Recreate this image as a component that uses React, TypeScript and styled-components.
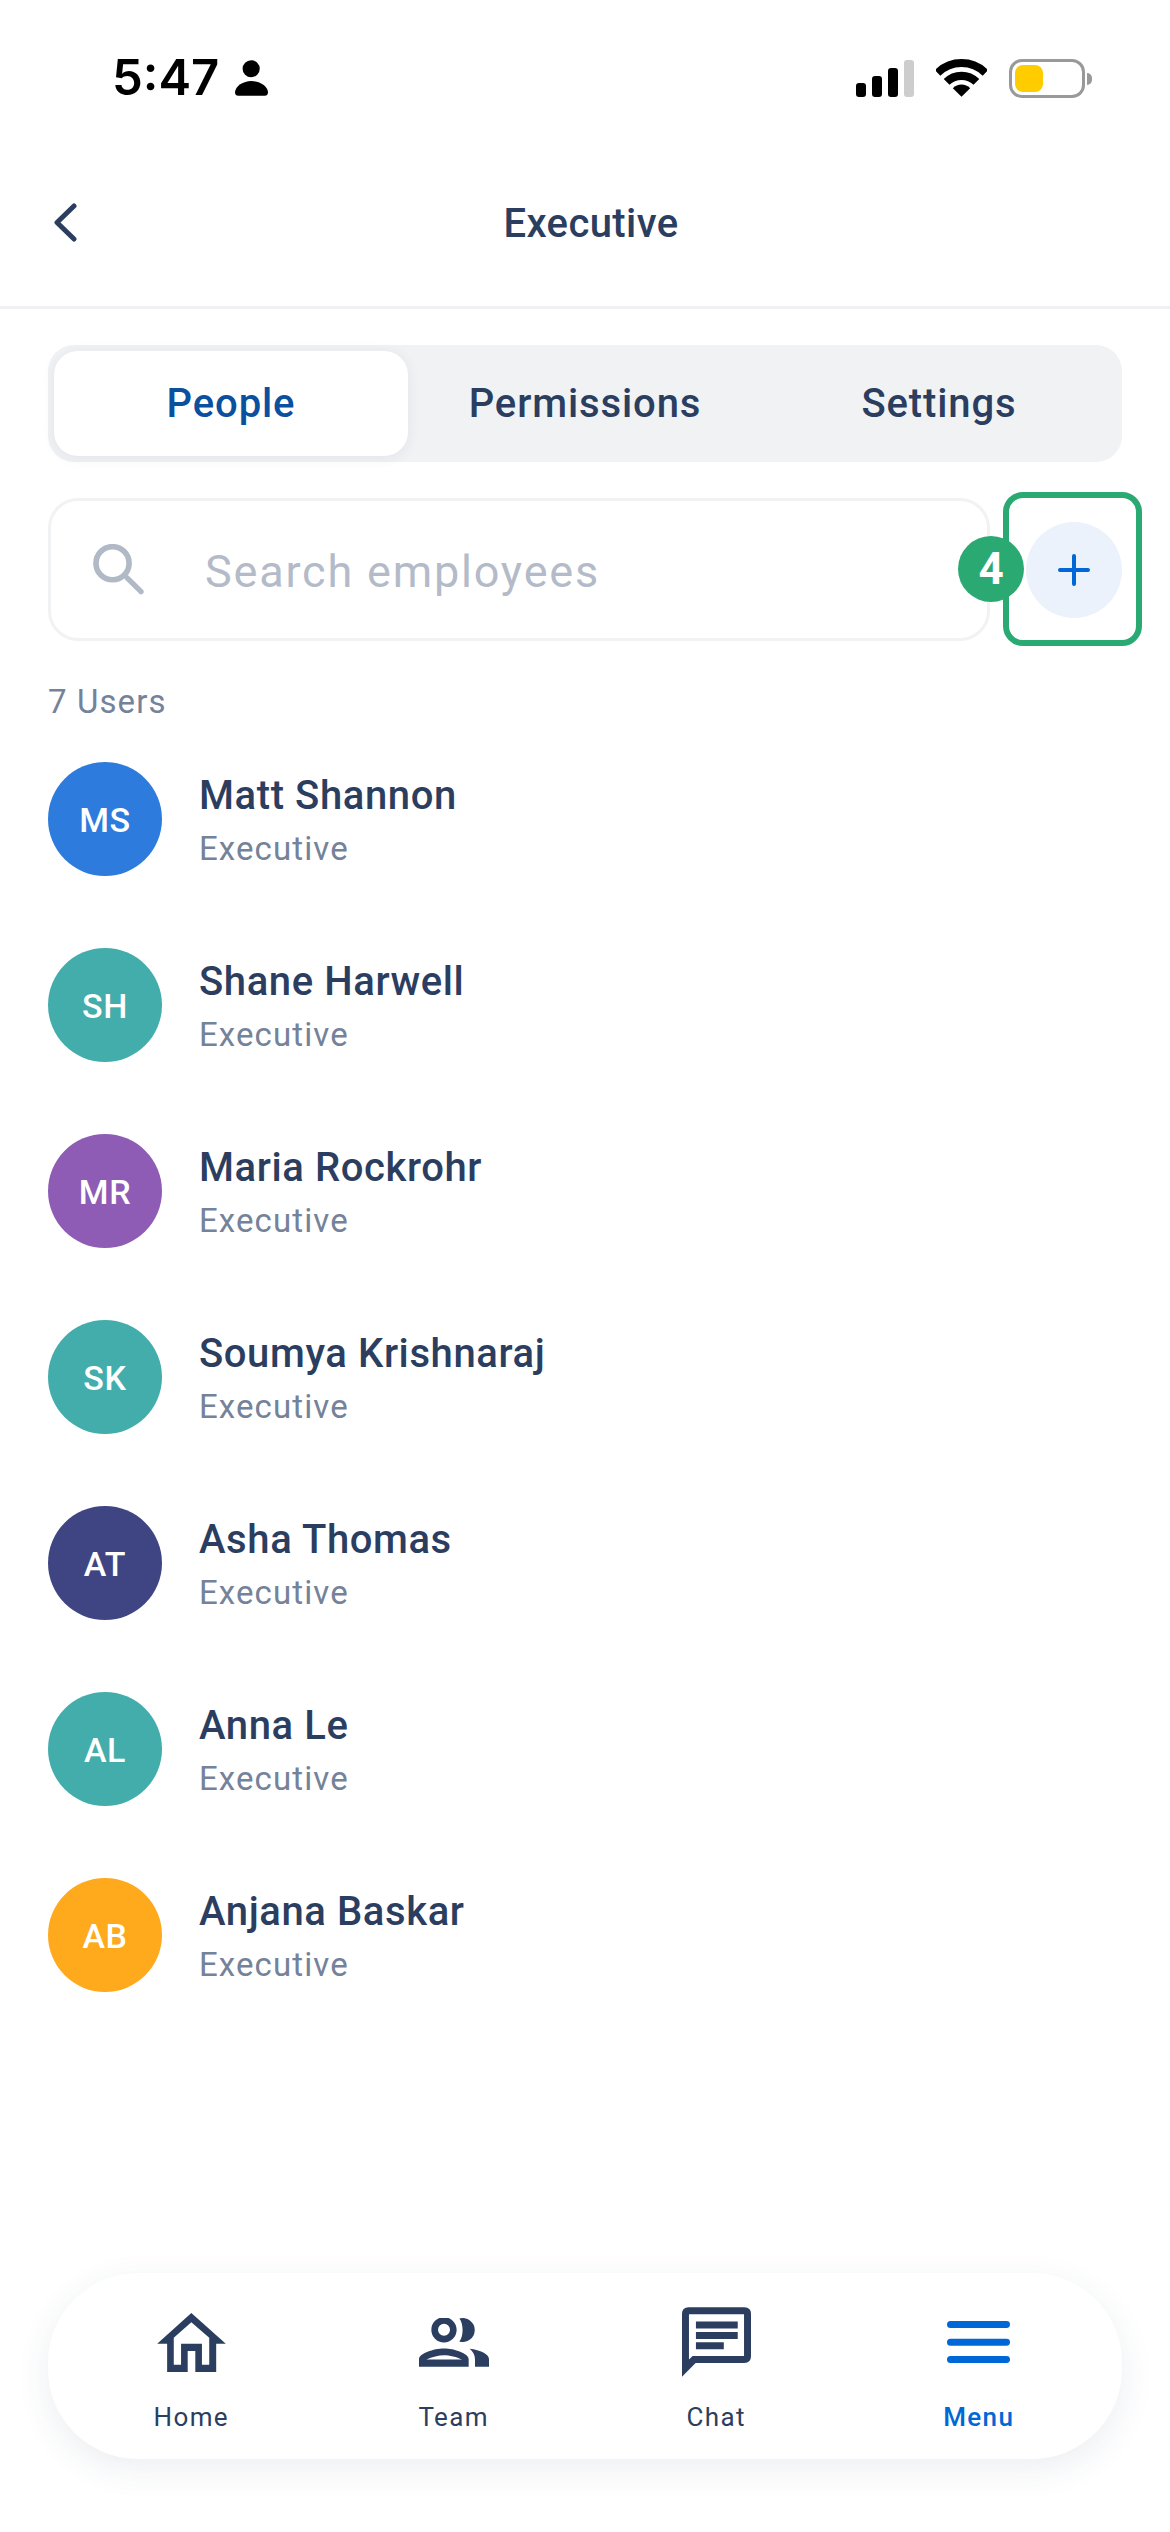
import React from "react";
import styled, { createGlobalStyle } from "styled-components";

const Global = createGlobalStyle`
  html, body { margin: 0; padding: 0; background: #fff; }
  * { box-sizing: border-box; }
`;

const Page = styled.div`
  width: 1170px;
  height: 2532px;
  background: #fff;
  display: flex;
  flex-direction: column;
  font-family: Roboto, "Noto Sans", sans-serif;
  color: #2b3e5f;
  overflow: hidden;
`;

const StatusBar = styled.div`
  height: 158px;
  padding: 58px 79px 0 112px;
  display: flex;
  justify-content: space-between;
  align-items: flex-start;
  flex-shrink: 0;
`;

const StatusLeft = styled.div`
  display: flex;
  align-items: center;
  gap: 16px;
  height: 40px;
`;

const Time = styled.span`
  font-family: Inter, "Liberation Sans", sans-serif;
  font-weight: 600;
  font-size: 49px;
  line-height: 40px;
  color: #000;
  letter-spacing: 0;
`;

const StatusRight = styled.div`
  display: flex;
  align-items: center;
  height: 40px;
  gap: 22px;
`;

const Bars = styled.div`
  display: flex;
  align-items: flex-end;
  gap: 6px;
  height: 37px;
`;

const Bar = styled.span<{ $h: number; $off?: boolean }>`
  width: 10px;
  height: ${(p) => p.$h}px;
  border-radius: 3px;
  background: ${(p) => (p.$off ? "#cdcdcd" : "#000")};
`;

const Battery = styled.div`
  position: relative;
  width: 76px;
  height: 39px;
  border: 3px solid #999;
  border-radius: 13px;
  padding: 3px;
  margin-right: 6px;
  &::after {
    content: "";
    position: absolute;
    right: -10px;
    top: 11px;
    width: 5px;
    height: 12px;
    border-radius: 0 6px 6px 0;
    background: #999;
  }
`;

const BatteryFill = styled.div`
  width: 28px;
  height: 100%;
  border-radius: 8px;
  background: #ffcc00;
`;

const Header = styled.header`
  position: relative;
  height: 151px;
  flex-shrink: 0;
  display: flex;
  align-items: center;
  justify-content: center;
  padding: 0 0 16px 12px;
  border-bottom: 3px solid #f0f1f4;
`;

const Back = styled.button`
  position: absolute;
  left: 52px;
  top: 45px;
  width: 28px;
  height: 39px;
  padding: 0;
  border: 0;
  background: none;
  display: flex;
`;

const Title = styled.h1`
  margin: 0;
  font-size: 40px;
  font-weight: 500;
  letter-spacing: 0.4px;
  line-height: 44px;
`;

const Tabs = styled.div`
  margin: 36px 48px 0;
  height: 117px;
  flex-shrink: 0;
  padding: 6px;
  border-radius: 26px;
  background: #f0f2f4;
  display: grid;
  grid-template-columns: repeat(3, 1fr);
`;

const Tab = styled.div<{ $active?: boolean }>`
  display: flex;
  align-items: center;
  justify-content: center;
  border-radius: 24px;
  font-size: 40px;
  font-weight: 500;
  letter-spacing: 0.9px;
  background: ${(p) => (p.$active ? "#fff" : "transparent")};
  color: ${(p) => (p.$active ? "#0b4f9f" : "#2b3e5f")};
  box-shadow: ${(p) => (p.$active ? "0 2px 14px rgba(43, 62, 95, 0.07)" : "none")};
`;

const SearchRow = styled.div`
  margin: 36px 48px 0;
  display: flex;
  align-items: center;
  justify-content: space-between;
  flex-shrink: 0;
`;

const SearchBox = styled.div`
  width: 942px;
  height: 143px;
  border: 3px solid #f0f2f4;
  border-radius: 30px;
  padding: 0 0 0 42px;
  display: flex;
  align-items: center;
  gap: 61px;
`;

const Placeholder = styled.span`
  font-size: 45px;
  letter-spacing: 1.8px;
  color: #b4bbc8;
  padding-top: 3px;
`;

const AddWrap = styled.div`
  position: relative;
  width: 96px;
  height: 96px;
`;

const AddButton = styled.button`
  width: 96px;
  height: 96px;
  padding: 0;
  border: 0;
  border-radius: 50%;
  background: #ebf2fb;
  display: flex;
  align-items: center;
  justify-content: center;
`;

const Highlight = styled.div`
  position: absolute;
  left: -23px;
  right: -20px;
  top: -30px;
  bottom: -28px;
  border: 6px solid #2aaa72;
  border-radius: 20px;
  pointer-events: none;
`;

const Badge = styled.div`
  position: absolute;
  left: -68px;
  top: 14px;
  width: 66px;
  height: 66px;
  border-radius: 50%;
  background: #2aaa72;
  color: #fff;
  font-size: 44px;
  font-weight: 700;
  display: flex;
  align-items: center;
  justify-content: center;
`;

const Count = styled.div`
  margin: 41px 48px 0;
  font-size: 33px;
  line-height: 40px;
  letter-spacing: 1.1px;
  color: #74829a;
  flex-shrink: 0;
`;

const List = styled.div`
  margin: 40px 48px 0;
  display: flex;
  flex-direction: column;
  gap: 72px;
  flex-shrink: 0;
`;

const Row = styled.div`
  display: flex;
  align-items: center;
  gap: 37px;
  height: 114px;
`;

const Avatar = styled.div<{ $bg: string }>`
  width: 114px;
  height: 114px;
  border-radius: 50%;
  background: ${(p) => p.$bg};
  color: #fff;
  font-size: 34px;
  font-weight: 500;
  letter-spacing: 0.6px;
  padding-top: 2px;
  display: flex;
  align-items: center;
  justify-content: center;
`;

const Info = styled.div`
  display: flex;
  flex-direction: column;
  margin-top: 4px;
`;

const Name = styled.div`
  font-size: 40px;
  font-weight: 500;
  line-height: 46px;
  letter-spacing: 0.6px;
`;

const Role = styled.div`
  margin-top: 10px;
  font-size: 33px;
  line-height: 40px;
  letter-spacing: 1.1px;
  color: #74829a;
`;

const Nav = styled.nav`
  margin: auto 48px 73px;
  height: 186px;
  padding: 0 12px;
  flex-shrink: 0;
  border-radius: 90px;
  background: #fff;
  box-shadow: 0 10px 34px rgba(43, 62, 95, 0.09);
  display: grid;
  grid-template-columns: repeat(4, 1fr);
`;

const NavItem = styled.div<{ $active?: boolean }>`
  position: relative;
  display: flex;
  flex-direction: column;
  align-items: center;
  font-size: 26px;
  font-weight: ${(p) => (p.$active ? 500 : 400)};
  letter-spacing: 1.4px;
  color: ${(p) => (p.$active ? "#0068d6" : "#2b3e5f")};
`;

const NavIcon = styled.div`
  height: 104px;
  display: flex;
  align-items: center;
  justify-content: center;
  padding-top: 34px;
  svg { display: block; }
`;

const NavLabel = styled.span`
  margin-top: 24px;
  line-height: 32px;
`;

const people = [
  { i: "MS", n: "Matt Shannon", c: "#2d7bdc" },
  { i: "SH", n: "Shane Harwell", c: "#43adab" },
  { i: "MR", n: "Maria Rockrohr", c: "#8e5bb5" },
  { i: "SK", n: "Soumya Krishnaraj", c: "#43adab" },
  { i: "AT", n: "Asha Thomas", c: "#3f4583" },
  { i: "AL", n: "Anna Le", c: "#43adab" },
  { i: "AB", n: "Anjana Baskar", c: "#ffa91d" },
];

export default function App() {
  return (
    <Page>
      <Global />
      <StatusBar>
        <StatusLeft>
          <Time>5:47</Time>
          <svg width="33" height="36" viewBox="402 90 100 108">
            <circle cx="451" cy="116" r="26" fill="#000" />
            <path d="M402 188C402 168 428 153 451 153C476 153 502 168 502 188C502 194 498 198 492 198H412C406 198 402 194 402 188Z" fill="#000" />
          </svg>
        </StatusLeft>
        <StatusRight>
          <Bars>
            <Bar $h={14} />
            <Bar $h={21} />
            <Bar $h={29} />
            <Bar $h={37} $off />
          </Bars>
          <svg width="51" height="38" viewBox="350 57 150 111">
            <path d="M354.6 97.6A99.5 99.5 0 0 1 495.4 97.6" fill="none" stroke="#000" strokeWidth="23" />
            <path d="M381.2 124.2A62 62 0 0 1 468.8 124.2" fill="none" stroke="#000" strokeWidth="24" />
            <path d="M425 168L399.5 142.5A36 36 0 0 1 450.5 142.5Z" fill="#000" />
          </svg>
          <Battery>
            <BatteryFill />
          </Battery>
        </StatusRight>
      </StatusBar>

      <Header>
        <Back aria-label="Back">
          <svg width="28" height="39" viewBox="0 0 28 39">
            <path d="M22 3L5 19.5L22 36" fill="none" stroke="#2b3e5f" strokeWidth="5" strokeLinecap="round" strokeLinejoin="round" />
          </svg>
        </Back>
        <Title>Executive</Title>
      </Header>

      <Tabs>
        <Tab $active>People</Tab>
        <Tab>Permissions</Tab>
        <Tab>Settings</Tab>
      </Tabs>

      <SearchRow>
        <SearchBox>
          <svg width="51" height="51" viewBox="189 189 154 154">
            <circle cx="248" cy="247" r="50" fill="none" stroke="#b2b9c6" strokeWidth="17" />
            <path d="M292 291L334 333" fill="none" stroke="#b2b9c6" strokeWidth="16" strokeLinecap="round" />
          </svg>
          <Placeholder>Search employees</Placeholder>
        </SearchBox>
        <AddWrap>
          <AddButton aria-label="Add">
            <svg width="32" height="32" viewBox="0 0 32 32">
              <path d="M16 2V30M2 16H30" fill="none" stroke="#0068d6" strokeWidth="4" strokeLinecap="round" />
            </svg>
          </AddButton>
          <Highlight />
          <Badge>4</Badge>
        </AddWrap>
      </SearchRow>

      <Count>7 Users</Count>

      <List>
        {people.map((p) => (
          <Row key={p.i}>
            <Avatar $bg={p.c}>{p.i}</Avatar>
            <Info>
              <Name>{p.n}</Name>
              <Role>Executive</Role>
            </Info>
          </Row>
        ))}
      </List>

      <Nav>
        <NavItem>
          <NavIcon>
            <svg width="69" height="59" viewBox="50 62 207 178">
              <path
                fillRule="evenodd"
                fill="#2b3e5f"
                d="M153 62L257 155H228V240H165V177H142V240H80V155H50ZM153 90L100 137V218H122V155H185V218H207V137Z"
              />
            </svg>
          </NavIcon>
          <NavLabel>Home</NavLabel>
        </NavItem>
        <NavItem>
          <NavIcon>
            <svg width="70" height="49" viewBox="836 84 210 146">
              <path
                fillRule="evenodd"
                fill="#2b3e5f"
                d="M911 81A38 38 0 1 1 910.9 157A38 38 0 1 1 911 81ZM911 101A18 18 0 1 0 911.1 137A18 18 0 1 0 911 101Z"
              />
              <path fill="#2b3e5f" d="M957 85A36 36 0 1 1 957 154C970 138 970 101 957 85Z" />
              <path
                fillRule="evenodd"
                fill="#2b3e5f"
                d="M836 230V207C836 190 880 175 911 175C942 175 985 190 985 207V230ZM858 208H965C950 200 927 195 911 195C895 195 875 200 858 208Z"
              />
              <path fill="#2b3e5f" d="M988 176C1020 180 1046 192 1046 207V230H1004V207C1004 195 998 185 988 176Z" />
            </svg>
          </NavIcon>
          <NavLabel>Team</NavLabel>
        </NavItem>
        <NavItem>
          <NavIcon>
            <svg width="69" height="70" viewBox="64 50 208 210">
              <path
                fillRule="evenodd"
                fill="#2b3e5f"
                d="M64 260V70Q64 50 84 50H252Q272 50 272 70V197Q272 218 252 218H105ZM85 71V208L96 197H251V71Z"
              />
              <path fill="#2b3e5f" d="M106 93H232V114H106ZM106 125H232V146H106ZM106 156H190V177H106Z" />
            </svg>
          </NavIcon>
          <NavLabel>Chat</NavLabel>
        </NavItem>
        <NavItem $active>
          <NavIcon>
            <svg width="63" height="42" viewBox="862 93 188 126">
              <path d="M872 103.5H1040M872 156.5H1040M872 208.5H1040" fill="none" stroke="#0068d6" strokeWidth="21" strokeLinecap="round" />
            </svg>
          </NavIcon>
          <NavLabel>Menu</NavLabel>
        </NavItem>
      </Nav>
    </Page>
  );
}
